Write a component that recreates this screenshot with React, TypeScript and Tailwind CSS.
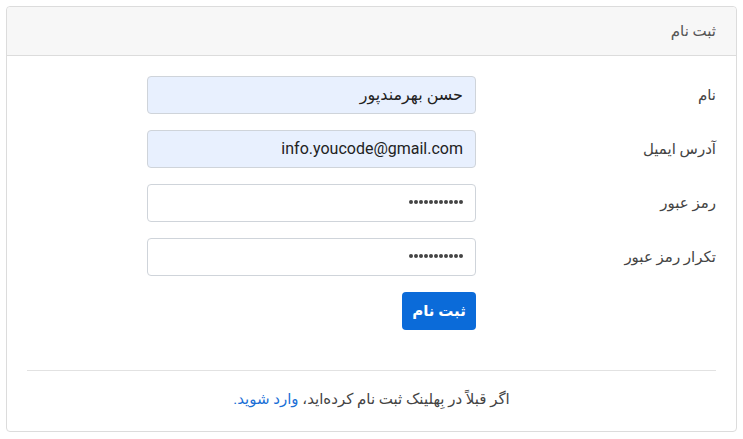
const fields = [
  { label: "نام", value: "حسن بهرمندپور", type: "text", filled: true },
  { label: "آدرس ایمیل", value: "info.youcode@gmail.com", type: "email", filled: true },
  { label: "رمز عبور", value: "", type: "password", filled: false },
  { label: "تکرار رمز عبور", value: "", type: "password", filled: false },
];

function Dots() {
  return (
    <div className="flex gap-[1px] mb-[3px]">
      {Array.from({ length: 11 }).map((_, i) => (
        <span key={i} className="block w-[4px] h-[4px] rounded-full bg-[#444]" />
      ))}
    </div>
  );
}

export default function App() {
  return (
    <div
      dir="rtl"
      className="min-h-[439px] bg-white pt-[6px] pl-[6px] pr-[6px]"
      style={{ fontFamily: 'Roboto, "DejaVu Sans", sans-serif' }}
    >
      <div className="w-[731px] rounded-[4px] border border-[#dcdcdc] bg-white">
        <div className="h-[49px] rounded-t-[4px] border-b border-[#dcdcdc] bg-[#f7f7f7] px-5 flex items-center text-[15px] text-[#555]">
          ثبت نام
        </div>
        <div className="px-5 pt-5 pb-5">
          <div className="flex flex-col gap-4">
            {fields.map((f) => (
              <div key={f.label} className="flex items-center">
                <div className="w-[240px] text-[15px] text-[#444]">{f.label}</div>
                <div
                  className={
                    "w-[329px] h-[38px] rounded-[4px] border border-[#cfd4da] px-3 flex items-center text-[16px] text-[#222] " +
                    (f.filled ? "bg-[#e8f0fe]" : "bg-white")
                  }
                >
                  {f.type === "password" ? <Dots /> : <span>{f.value}</span>}
                </div>
              </div>
            ))}
            <div className="flex">
              <div className="w-[240px]" />
              <button className="h-[38px] w-[74px] rounded-[4px] bg-[#0b6bd9] text-[15px] font-bold text-white">
                ثبت نام
              </button>
            </div>
          </div>
          <hr className="mt-10 border-t border-[#e2e2e2]" />
          <p className="mt-4 text-center text-[15px] leading-6 text-[#444]">
            اگر قبلاً در بِهلینک ثبت نام کرده‌اید، <a className="text-[#1a6fd6]">وارد شوید.</a>
          </p>
        </div>
      </div>
    </div>
  );
}
